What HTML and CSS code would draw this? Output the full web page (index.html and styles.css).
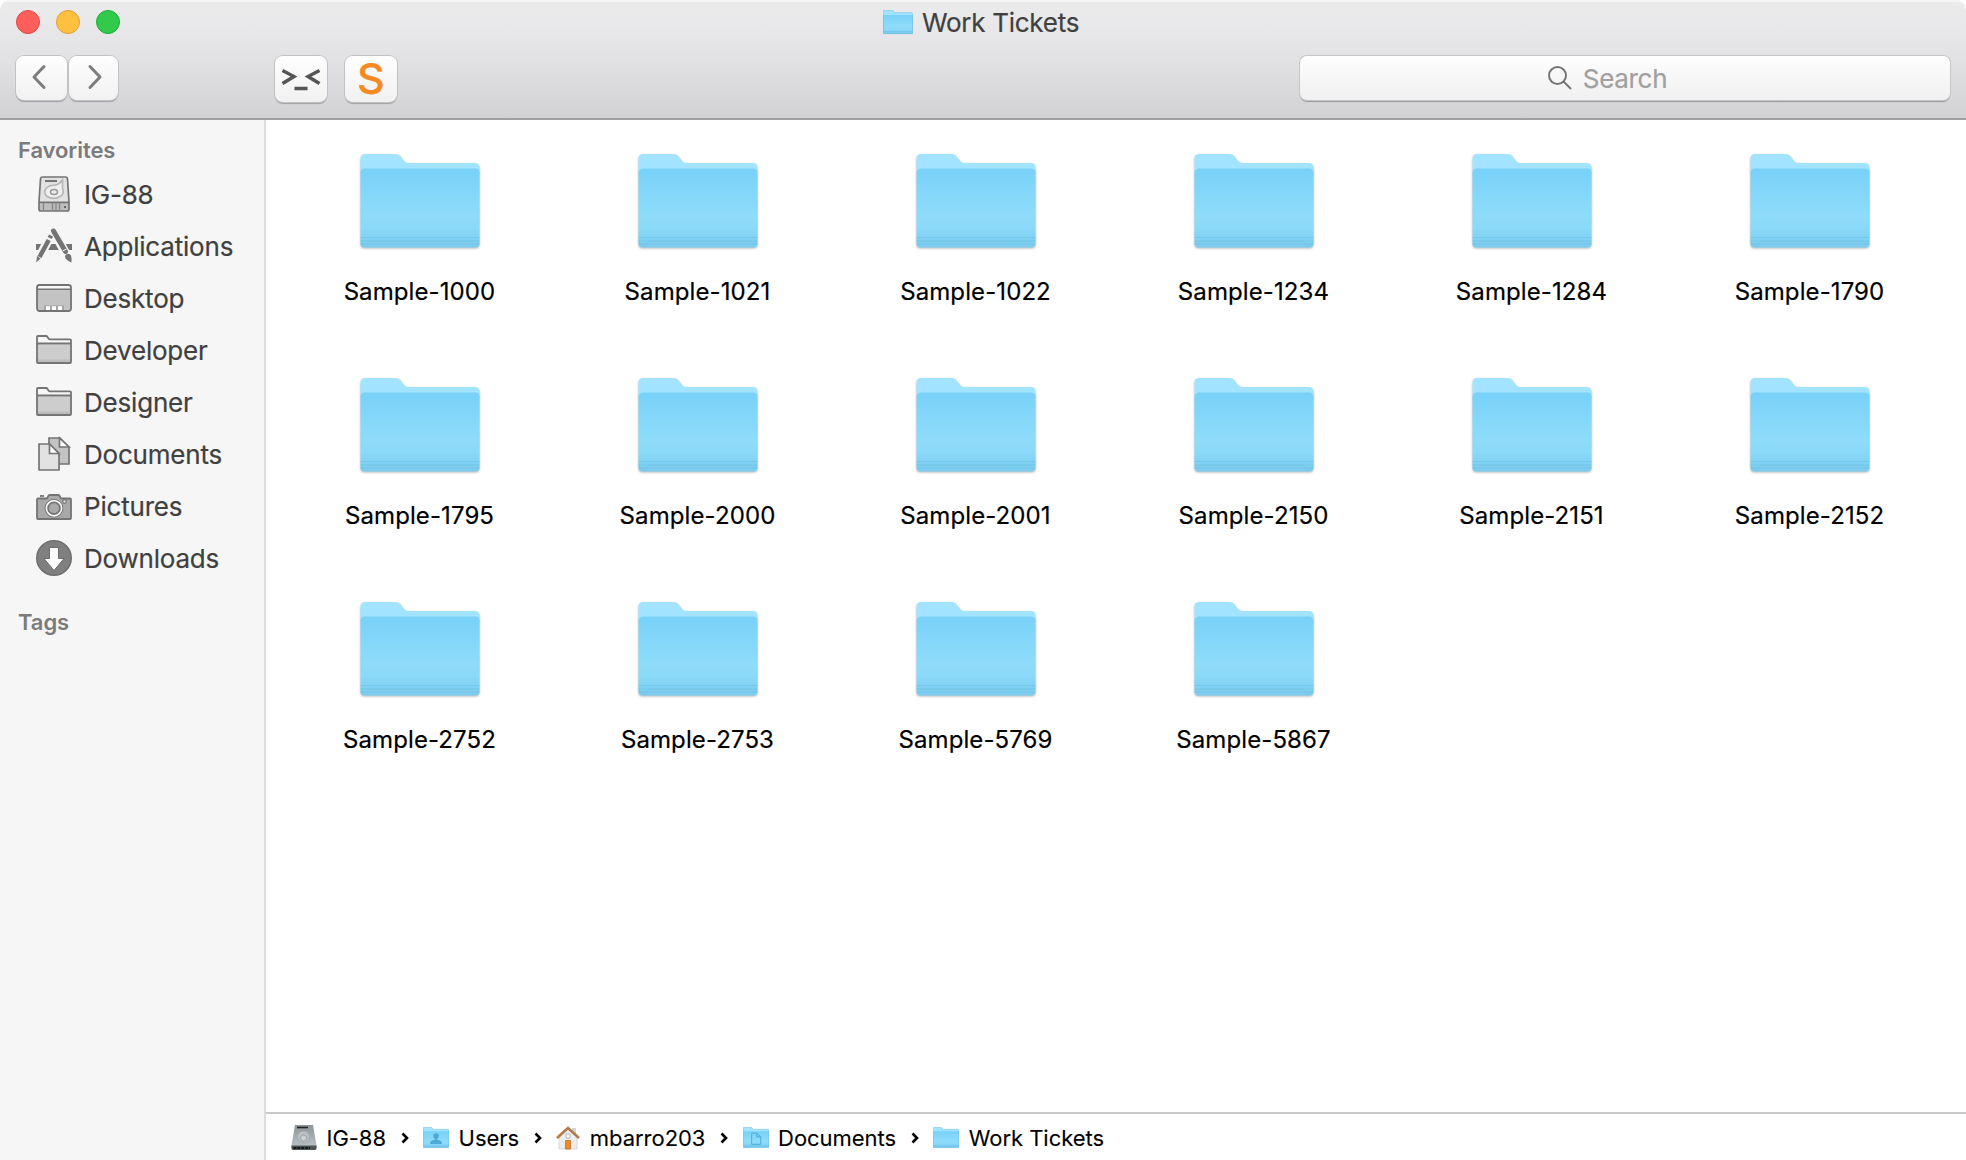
FILE: index.html
```html
<!DOCTYPE html>
<html lang="en">
<head>
<meta charset="utf-8">
<title>Work Tickets</title>
<link rel="stylesheet" href="styles.css">
</head>
<body>
<svg class="defs" width="0" height="0" aria-hidden="true">
  <defs>
    <linearGradient id="front" x1="0" y1="0" x2="0" y2="1">
      <stop offset="0" stop-color="#78d1f8"/>
      <stop offset=".6" stop-color="#8edcfa"/>
      <stop offset=".76" stop-color="#8bd9f8"/>
      <stop offset=".87" stop-color="#82d2f3"/>
      <stop offset="1" stop-color="#7acbec"/>
    </linearGradient>
    <linearGradient id="metal" x1="0" y1="0" x2="0" y2="1">
      <stop offset="0" stop-color="#8c9498"/>
      <stop offset="1" stop-color="#c3cacc"/>
    </linearGradient>
    <symbol id="folder" viewBox="0 0 120 96">
      <path d="M0.5 20V6q0-5 5-5H35q4 0 6 3l3 4q1.500 2 4 2h66.500q5 0 5 5v6z" fill="#a2e3ff"/>
      <path d="M0.500 20q0-4.500 5-4.500h109q5 0 5 4.500v70.500q0 4-4 4H4.500q-4 0-4-4z" fill="url(#front)"/>
      <path d="M.5 84.500h119M.5 88h119M.5 91h119" stroke="#6bbfe6" stroke-opacity=".55" stroke-width="1"/>
    </symbol>
    <symbol id="folder-small" viewBox="0 0 30 26">
      <path d="M0 7V2q0-2 2-2H8q1.300 0 2 .8L12 2.700H28.500q1.500 0 1.500 1.500V8z" fill="#a2e3ff" stroke="#7cc4e4" stroke-width=".7"/>
      <path d="M0 5H30V22.500q0 1.500-1.500 1.500h-27Q0 24 0 22.500z" fill="url(#front)"/>
      <path d="M0 21.700H30" stroke="#6bbfe6" stroke-width=".8"/>
      <path d="M.4 5V23.600H29.600V5" fill="none" stroke="#74c0e2" stroke-width=".8"/>
    </symbol>
    <symbol id="side-folder" viewBox="0 0 36 36">
      <path d="M1 12.500H35V30.500Q35 31 34.500 31H1.500Q1 31 1 30.500z" fill="#cdcdcd"/>
      <path d="M1 27.500H35V31H1z" fill="#bcbcbc"/>
      <path d="M1 30V5Q1 4 2 4H10Q11 4 11.500 5L12.500 6.500Q13 7.300 14 7.300H34Q35 7.300 35 8.300V30Q35 31 34 31H2Q1 31 1 30zM1 13Q1 11.500 2.500 11.500H33.500Q35 11.500 35 13" fill="none" stroke="#747474" stroke-width="1.800"/>
    </symbol>
  </defs>
</svg>
<div class="window">
  <header class="toolbar">
    <div class="titlebar">
      <div class="lights"><i class="light close"></i><i class="light minimize"></i><i class="light zoom"></i></div>
      <h1 class="title"><svg class="title-icon"><use href="#folder-small"/></svg><span>Work Tickets</span></h1>
    </div>
    <div class="tools">
      <div class="nav">
        <button class="btn back"><svg width="14" height="24" viewBox="0 0 14 24"><path d="M12 1.500L2 12L12 22.500"/></svg></button>
        <button class="btn fwd"><svg width="14" height="24" viewBox="0 0 14 24"><path d="M2 1.500L12 12L2 22.500"/></svg></button>
      </div>
      <button class="btn tool"><svg width="40" height="24" viewBox="0 0 40 24"><path class="term" d="M1.500 3.500L13 9.500L1.500 16.500M38.500 3.500L27 9.500L38.500 16.500M13.500 21.500H26.500"/></svg></button>
      <button class="btn tool sublime">S</button>
      <label class="search"><svg width="24" height="24" viewBox="0 0 24 24"><circle cx="9.500" cy="9.500" r="8.500"/><path d="M15.500 15.500L23 23"/></svg><span>Search</span></label>
    </div>
  </header>
  <div class="body">
    <nav class="sidebar">
      <h2>Favorites</h2>
      <ul>
        <li><svg viewBox="0 0 36 36"><path d="M6.500 1H29.500Q31.300 1 31.500 3L33 26H3L4.500 3Q4.700 1 6.500 1z" fill="#e2e2e2"/><path d="M3 26H33V33Q33 35 31 35H5Q3 35 3 33z" fill="#bdbdbd"/><path d="M6.500 1H29.500Q31.300 1 31.500 3L33 26V33Q33 35 31 35H5Q3 35 3 33V26L4.500 3Q4.700 1 6.500 1zM3 26.300H33" fill="none" stroke="#747474" stroke-width="1.700"/><path d="M9 5H21" stroke="#747474" stroke-width="1.800"/><path d="M26.500 4V12Q28.500 17 25 20Q18 24.500 11 20.500Q6.500 16 11 11.500Q14 9 19 9.300Q24 8 26.500 4z" fill="#eee" stroke="#b5b5b5" stroke-width="1.600"/><ellipse cx="18" cy="16" rx="3.500" ry="2.500" fill="none" stroke="#999" stroke-width="1.500"/><path d="M7.500 27V34M16.500 27V34M20 27V34M23.500 27V34" stroke="#858585" stroke-width="1.300"/><path d="M28 30h2v2h-2z" fill="#666"/></svg><span>IG-88</span></li>
        <li><svg viewBox="0 0 36 36"><path d="M0 16H36V22H0z" fill="#747474"/><path d="M16.500 4L1.500 33" stroke="#f6f6f6" stroke-width="9"/><path d="M17.500 3L34 33" stroke="#f6f6f6" stroke-width="9"/><path d="M17.500 3L29.500 23.500" stroke="#747474" stroke-width="5" stroke-linecap="round"/><path d="M15 7.500L13.700 10" stroke="#747474" stroke-width="4.500"/><path d="M12.700 12L3.500 29" stroke="#747474" stroke-width="4.500"/><path d="M1 28L4.500 30.500L.2 34.500z" fill="#747474"/><path d="M26.500 23L30.500 21" stroke="#f6f6f6" stroke-width="1"/><path d="M29.500 27Q33 24.500 35 27.500Q35.800 30 35.500 34.500Q32 33 30 31Q28.500 29 29.500 27z" fill="#747474"/></svg><span>Applications</span></li>
        <li><svg viewBox="0 0 36 36"><rect x="1" y="5" width="34" height="26" rx="2.500" fill="#c3c3c3"/><path d="M2 6H34V9H2z" fill="#f8f8f8"/><rect x="1" y="5" width="34" height="26" rx="2.500" fill="none" stroke="#747474" stroke-width="1.800"/><path d="M1 9.300H35" stroke="#747474" stroke-width="1.600"/><path d="M8 30V25.500H28V30z" fill="#a5a5a5"/><path d="M10 26.300H14V30H10zM16 26.300H20V30H16zM22 26.300H26V30H22z" fill="#fff"/></svg><span>Desktop</span></li>
        <li><svg><use href="#side-folder"/></svg><span>Developer</span></li>
        <li><svg><use href="#side-folder"/></svg><span>Designer</span></li>
        <li><svg viewBox="0 0 36 36" stroke="#747474" stroke-width="1.700" stroke-linejoin="miter"><path d="M13 2H24L33 11.500V28H13z" fill="#c3c3c3"/><path d="M23.500 2V11H33z" fill="#fff"/><path d="M3 8H13.500L23 17.500V34H3z" fill="#e2e2e2"/><path d="M13.500 8V17.500H23z" fill="#fff"/></svg><span>Documents</span></li>
        <li><svg viewBox="0 0 36 36"><path d="M2 10.500H10Q11.500 10.500 12 8.500Q12.500 7 14 7H22Q23.500 7 24 8.500Q24.500 10.500 26 10.500H34Q35 10.500 35 11.500V30Q35 31 34 31H2Q1 31 1 30V11.500Q1 10.500 2 10.500z" fill="#a9a9a9" stroke="#747474" stroke-width="1.800"/><path d="M4 8H8" stroke="#747474" stroke-width="1.800"/><circle cx="18" cy="20.300" r="9.300" fill="#747474"/><circle cx="18" cy="20.300" r="7.600" fill="#747474" stroke="#fff" stroke-width="1.600"/><circle cx="18" cy="20.300" r="5" fill="#a9a9a9"/><circle cx="28.500" cy="13.500" r="1.800" fill="#ddd" stroke="#747474" stroke-width="1.200"/></svg><span>Pictures</span></li>
        <li><svg viewBox="0 0 36 36"><circle cx="18" cy="18" r="17.200" fill="#808080" stroke="#707070" stroke-width="1.600"/><path d="M13.500 7.500H22.500V18.500H28L18 30.500L8 18.500H13.500z" fill="#fff" stroke="#6c6c6c" stroke-width="1"/></svg><span>Downloads</span></li>
      </ul>
      <h2>Tags</h2>
    </nav>
    <main class="content">
      <div class="grid">
        <figure><svg><use href="#folder"/></svg><figcaption>Sample-1000</figcaption></figure>
        <figure><svg><use href="#folder"/></svg><figcaption>Sample-1021</figcaption></figure>
        <figure><svg><use href="#folder"/></svg><figcaption>Sample-1022</figcaption></figure>
        <figure><svg><use href="#folder"/></svg><figcaption>Sample-1234</figcaption></figure>
        <figure><svg><use href="#folder"/></svg><figcaption>Sample-1284</figcaption></figure>
        <figure><svg><use href="#folder"/></svg><figcaption>Sample-1790</figcaption></figure>
        <figure><svg><use href="#folder"/></svg><figcaption>Sample-1795</figcaption></figure>
        <figure><svg><use href="#folder"/></svg><figcaption>Sample-2000</figcaption></figure>
        <figure><svg><use href="#folder"/></svg><figcaption>Sample-2001</figcaption></figure>
        <figure><svg><use href="#folder"/></svg><figcaption>Sample-2150</figcaption></figure>
        <figure><svg><use href="#folder"/></svg><figcaption>Sample-2151</figcaption></figure>
        <figure><svg><use href="#folder"/></svg><figcaption>Sample-2152</figcaption></figure>
        <figure><svg><use href="#folder"/></svg><figcaption>Sample-2752</figcaption></figure>
        <figure><svg><use href="#folder"/></svg><figcaption>Sample-2753</figcaption></figure>
        <figure><svg><use href="#folder"/></svg><figcaption>Sample-5769</figcaption></figure>
        <figure><svg><use href="#folder"/></svg><figcaption>Sample-5867</figcaption></figure>
      </div>
      <footer class="path">
        <span class="crumb"><svg class="drive" viewBox="0 0 26 26"><path d="M4 0H22L25.500 20V23Q25.500 25 24 25H2Q.5 25 .5 23V20z" fill="url(#metal)"/><path d="M.5 20.500H25.500V23Q25.500 25 24 25H2Q.5 25 .5 23z" fill="#4d5357"/><path d="M2.500 22.800H19" stroke="#111" stroke-width="1.800" stroke-dasharray="3 .8"/><path d="M6 2.500H17" stroke="#222" stroke-width="1.600"/><circle cx="12.500" cy="12" r="6" fill="#b9c1c4" stroke="#a3abae"/><circle cx="12.500" cy="13" r="3" fill="#ced4d6" stroke="#8e9699" stroke-width=".8"/></svg><span>IG-88</span></span>
        <svg class="sep" viewBox="0 0 8 12"><path d="M1.500 1.500L6 6L1.500 10.500"/></svg>
        <span class="crumb"><svg class="mini" viewBox="0 0 30 26"><use href="#folder-small" width="30" height="26"/><circle cx="15" cy="10.500" r="3.200" fill="#4ba9d3"/><path d="M8.500 19.500V17.500Q9 15.800 13.500 14.800V12H16.500V14.800Q21 15.800 21.500 17.500V19.500z" fill="#4ba9d3"/></svg><span>Users</span></span>
        <svg class="sep" viewBox="0 0 8 12"><path d="M1.500 1.500L6 6L1.500 10.500"/></svg>
        <span class="crumb"><svg class="house" viewBox="0 0 24 24"><path d="M16 2H20V9H16z" fill="#d5d5d5"/><path d="M3 10L12 2.500L21 10V23H3z" fill="#eee" stroke="#ccc" stroke-width=".7"/><path d="M1 12L12 2L23 12" fill="none" stroke="#b17b48" stroke-width="2.600"/><path d="M10 8H14V12H10z" fill="#fff" stroke="#aaa" stroke-width=".8"/><path d="M9.500 14.500H14.500V23H9.500z" fill="#f08c1d" stroke="#b9702a" stroke-width=".8"/></svg><span>mbarro203</span></span>
        <svg class="sep" viewBox="0 0 8 12"><path d="M1.500 1.500L6 6L1.500 10.500"/></svg>
        <span class="crumb"><svg class="mini" viewBox="0 0 30 26"><use href="#folder-small" width="30" height="26"/><path d="M10 7H16L20.500 11.500V20H10zM16 7V11.500H20.500" fill="none" stroke="#4ba9d3" stroke-width="1.100"/></svg><span>Documents</span></span>
        <svg class="sep" viewBox="0 0 8 12"><path d="M1.500 1.500L6 6L1.500 10.500"/></svg>
        <span class="crumb"><svg class="mini"><use href="#folder-small" width="26" height="22.500"/></svg><span>Work Tickets</span></span>
      </footer>
    </main>
  </div>
</div>
</body>
</html>
```
FILE: styles.css
```css
* { box-sizing: border-box; margin: 0; padding: 0; }
body { background: #fff; font-family: Inter, "Liberation Sans", sans-serif; color: #000; -webkit-text-stroke: .2px; }
svg { display: block; flex: none; overflow: visible; }
.defs { position: absolute; }
.window { width: 1966px; height: 1160px; display: flex; flex-direction: column; overflow: hidden; border-radius: 10px 10px 0 0; background: #fff; }

.toolbar { height: 120px; flex: none; background: linear-gradient(#ebebec, #e6e6e8 35%, #d2d1d4); border-bottom: 2px solid #a09fa2; box-shadow: inset 0 2px #f5f5f6; }
.titlebar { height: 44px; display: grid; grid-template-columns: 1fr auto 1fr; align-items: center; }
.lights { display: flex; gap: 16px; padding-left: 16px; }
.light { width: 24px; height: 24px; border-radius: 50%; border: 1px solid; }
.close { background: #fe5f5a; border-color: #e24842; }
.minimize { background: #ffbf3f; border-color: #dfa033; }
.zoom { background: #32ca4b; border-color: #22ab38; }
.title { display: flex; align-items: center; gap: 9px; font-size: 26px; font-weight: 400; letter-spacing: -.27px; color: #404040; white-space: nowrap; padding: 1px 4px 0 0; }
.title-icon { width: 30px; height: 26px; }
.tools { display: flex; align-items: flex-start; padding: 12px 16px 0; }
.nav { display: flex; gap: 2px; width: 259px; }
.btn { display: flex; align-items: center; justify-content: center; border: 0; border-radius: 8px; background: linear-gradient(#fefefe, #f1f1f1); box-shadow: 0 0 0 1px #c2c2c4, 0 1.500px 1px #a0a0a2; height: 44px; font-family: inherit; }
.btn path { fill: none; stroke: #7d7d7d; stroke-width: 3; stroke-linecap: round; stroke-linejoin: round; }
.back { width: 51px; padding: 0 5px 2px 0; }
.fwd { width: 49px; padding: 0 0 2px 3px; }
.tool { width: 52px; height: 46px; margin-right: 18px; }
.btn .term { stroke: #555; stroke-width: 3.400; stroke-linecap: butt; stroke-linejoin: miter; }
.sublime { font-size: 43px; font-weight: 500; color: #f58a22; line-height: 44px; padding-bottom: 2px; }
.search { margin-left: auto; width: 650px; height: 44px; border-radius: 7px; background: linear-gradient(#fefefe, #f0f0f0); box-shadow: 0 0 0 1px #c6c6c8, 0 1.500px 1px #98989a; display: flex; align-items: center; justify-content: center; gap: 11px; padding-right: 35px; font-size: 26px; letter-spacing: -.3px; color: #a0a0a0; }
.search svg { fill: none; stroke: #757575; stroke-width: 2; }

.body { flex: 1; display: flex; min-height: 0; }
.sidebar { width: 266px; flex: none; background: #f6f6f6; border-right: 2px solid #dcdcdc; padding-top: 12px; }
.sidebar h2 { font-size: 22px; line-height: 36px; font-weight: 600; letter-spacing: -.08px; color: #7b7b7b; padding-left: 18px; -webkit-text-stroke: 0; }
.sidebar ul { list-style: none; padding-bottom: 20px; }
.sidebar li { height: 52px; display: flex; align-items: center; gap: 12px; padding-left: 36px; font-size: 26px; letter-spacing: -.2px; color: #404040; white-space: nowrap; }
.sidebar li svg { width: 36px; height: 36px; }

.content { flex: 1; display: flex; flex-direction: column; }
.grid { display: grid; grid-template-columns: repeat(6, 278px); grid-auto-rows: 224px; padding: 32.500px 0 0 15px; }
.grid figure { display: flex; flex-direction: column; align-items: center; gap: 28.500px; }
.grid svg { width: 120px; height: 96px; filter: drop-shadow(0 1.500px 1px rgba(0,0,0,.28)); }
.grid figcaption { font-size: 24px; line-height: 30px; letter-spacing: .1px; padding-right: 1px; white-space: nowrap; }

.path { height: 48px; margin-top: auto; border-top: 2px solid #c9c9c9; display: flex; align-items: center; padding: 2px 0 0 25px; gap: 14.550px; font-size: 22px; letter-spacing: -.03px; -webkit-text-stroke: .1px; }
.crumb { display: flex; align-items: center; gap: 9.500px; }
.mini { width: 26px; height: 22.500px; }
.drive { width: 26px; height: 26px; }
.house { width: 24px; height: 24px; }
.sep { width: 8px; height: 12px; fill: none; stroke: #000; stroke-width: 2.600; }
```
